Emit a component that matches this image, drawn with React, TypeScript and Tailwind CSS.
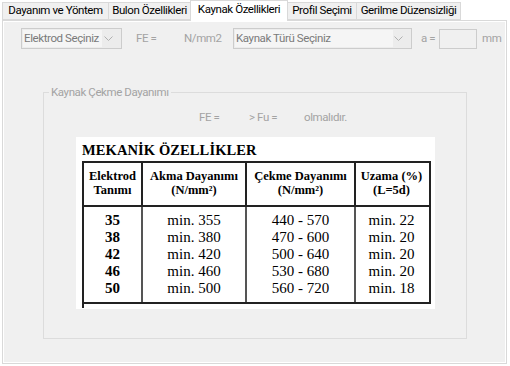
import React from 'react';

const ui = { fontFamily: 'Roboto, "Liberation Sans", Arial, sans-serif' };
const serif = { fontFamily: '"Liberation Serif", "Times New Roman", serif' };

const tabs = [
  { label: 'Dayanım ve Yöntem', w: 'w-[107px]' },
  { label: 'Bulon Özellikleri', w: 'w-[83px]' },
  { label: 'Kaynak Özellikleri', w: 'w-[98px]', active: true },
  { label: 'Profil Seçimi', w: 'w-[70px]' },
  { label: 'Gerilme Düzensizliği', w: 'w-[105px]' },
];

const rows = [
  ['35', 'min. 355', '440 - 570', 'min. 22'],
  ['38', 'min. 380', '470 - 600', 'min. 20'],
  ['42', 'min. 420', '500 - 640', 'min. 20'],
  ['46', 'min. 460', '530 - 680', 'min. 20'],
  ['50', 'min. 500', '560 - 720', 'min. 18'],
];

const Chevron = () => (
  <svg width="9" height="5" viewBox="0 0 9 5" className="shrink-0">
    <path d="M0.5 0.5 L4.5 4.5 L8.5 0.5" fill="none" stroke="#b0b0b0" strokeWidth="1" />
  </svg>
);

const Combo = ({ text, w, textW }: { text: string; w: string; textW: string }) => (
  <div className={`${w} h-[21px] border border-[#cccccc] bg-[#ececec] flex items-center pl-[1px] pr-[8px]`}>
    <div className={`${textW} h-[17px] bg-[#f5f5f5] text-[#7a7a7a] flex items-center pl-[1px] whitespace-nowrap overflow-hidden`}>
      {text}
    </div>
    <div className="flex-1 flex justify-end">
      <Chevron />
    </div>
  </div>
);

const App = () => {
  return (
    <div className="w-[510px] h-[366px] bg-white text-[11.5px] tracking-[-0.4px] text-black overflow-hidden" style={ui}>
      {/* tab headers */}
      <div className="flex items-end h-[20px] pl-[2px]">
        {tabs.map((t) =>
          t.active ? (
            <div
              key={t.label}
              className={`${t.w} h-[21px] -mb-px -ml-px relative z-10 bg-white border border-b-0 border-[#d9d9d9] flex items-center justify-center pb-[2px] whitespace-nowrap`}
            >
              {t.label}
            </div>
          ) : (
            <div
              key={t.label}
              className={`${t.w} h-[18px] bg-[#f0f0f0] border border-[#d9d9d9] -ml-px first:ml-0 flex items-center justify-center whitespace-nowrap`}
            >
              {t.label}
            </div>
          )
        )}
      </div>

      {/* tab page */}
      <div className="ml-[2px] w-[505px] h-[344px] border border-[#d9d9d9] bg-white p-px">
        <div className="w-full h-full bg-[#f0f0f0] pt-[6px]">
          {/* top row */}
          <div className="flex items-center h-[21px] text-[#a3a3a3]">
            <div className="ml-[17px]">
              <Combo text="Elektrod Seçiniz" w="w-[101px]" textW="w-[79px]" />
            </div>
            <span className="ml-[14px] w-[48px]">FE =</span>
            <span className="w-[49px]">N/mm2</span>
            <Combo text="Kaynak Türü Seçiniz" w="w-[179px]" textW="w-[158px]" />
            <span className="ml-[9px] w-[18px]">a =</span>
            <div className="w-[38px] h-[20px] border border-[#cccccc] bg-[#f0f0f0]" />
            <span className="ml-[5px]">mm</span>
          </div>

          {/* group box */}
          <fieldset className="ml-[39px] mt-[35px] w-[424px] h-[255px] border border-[#dcdcdc] px-0 pb-0">
            <legend className="ml-[5px] px-[2px] text-[#a3a3a3]">Kaynak Çekme Dayanımı</legend>

            <div className="flex h-[14px] mt-[8px] text-[#a3a3a3]">
              <span className="ml-[155px] w-[50px]">FE =</span>
              <span className="w-[55px]">&gt; Fu =</span>
              <span>olmalıdır.</span>
            </div>

            {/* properties image */}
            <div className="ml-[32px] mt-[14px] w-[359px] h-[172px] bg-white pl-[6px] pt-[4px] tracking-normal" style={serif}>
              <div className="text-[14.5px] leading-[18px] font-bold tracking-[0.1px]">MEKANİK ÖZELLİKLER</div>
              <div className="mt-[2px] w-[349px] border-2 border-[#222]">
                <div className="grid grid-cols-[57px_104px_109px_73px] border-b-2 border-[#222] text-[12.5px] leading-[14px] font-bold text-center">
                  <div className="pt-[6px] pb-[8px]">Elektrod<br />Tanımı</div>
                  <div className="pt-[6px] pb-[8px] border-l-2 border-[#222]">Akma Dayanımı<br />(N/mm²)</div>
                  <div className="pt-[6px] pb-[8px] border-l-2 border-[#222]">Çekme Dayanımı<br />(N/mm²)</div>
                  <div className="pt-[6px] pb-[8px] border-l-2 border-[#222]">Uzama (%)<br />(L=5d)</div>
                </div>
                <div className="grid grid-cols-[57px_104px_109px_73px] text-[15px] leading-[17px] text-center">
                  <div className="pt-[5px] pb-[5px] font-bold">
                    {rows.map((r) => <div key={r[0]}>{r[0]}</div>)}
                  </div>
                  <div className="pt-[5px] pb-[5px] border-l-2 border-[#555]">
                    {rows.map((r) => <div key={r[0]}>{r[1]}</div>)}
                  </div>
                  <div className="pt-[5px] pb-[5px] border-l-2 border-[#555]">
                    {rows.map((r) => <div key={r[0]}>{r[2]}</div>)}
                  </div>
                  <div className="pt-[5px] pb-[5px] border-l-2 border-[#555]">
                    {rows.map((r) => <div key={r[0]}>{r[3]}</div>)}
                  </div>
                </div>
              </div>
              <div className="w-[2px] h-[4px] bg-[#222]" />
            </div>
          </fieldset>
        </div>
      </div>
    </div>
  );
};

export default App;
